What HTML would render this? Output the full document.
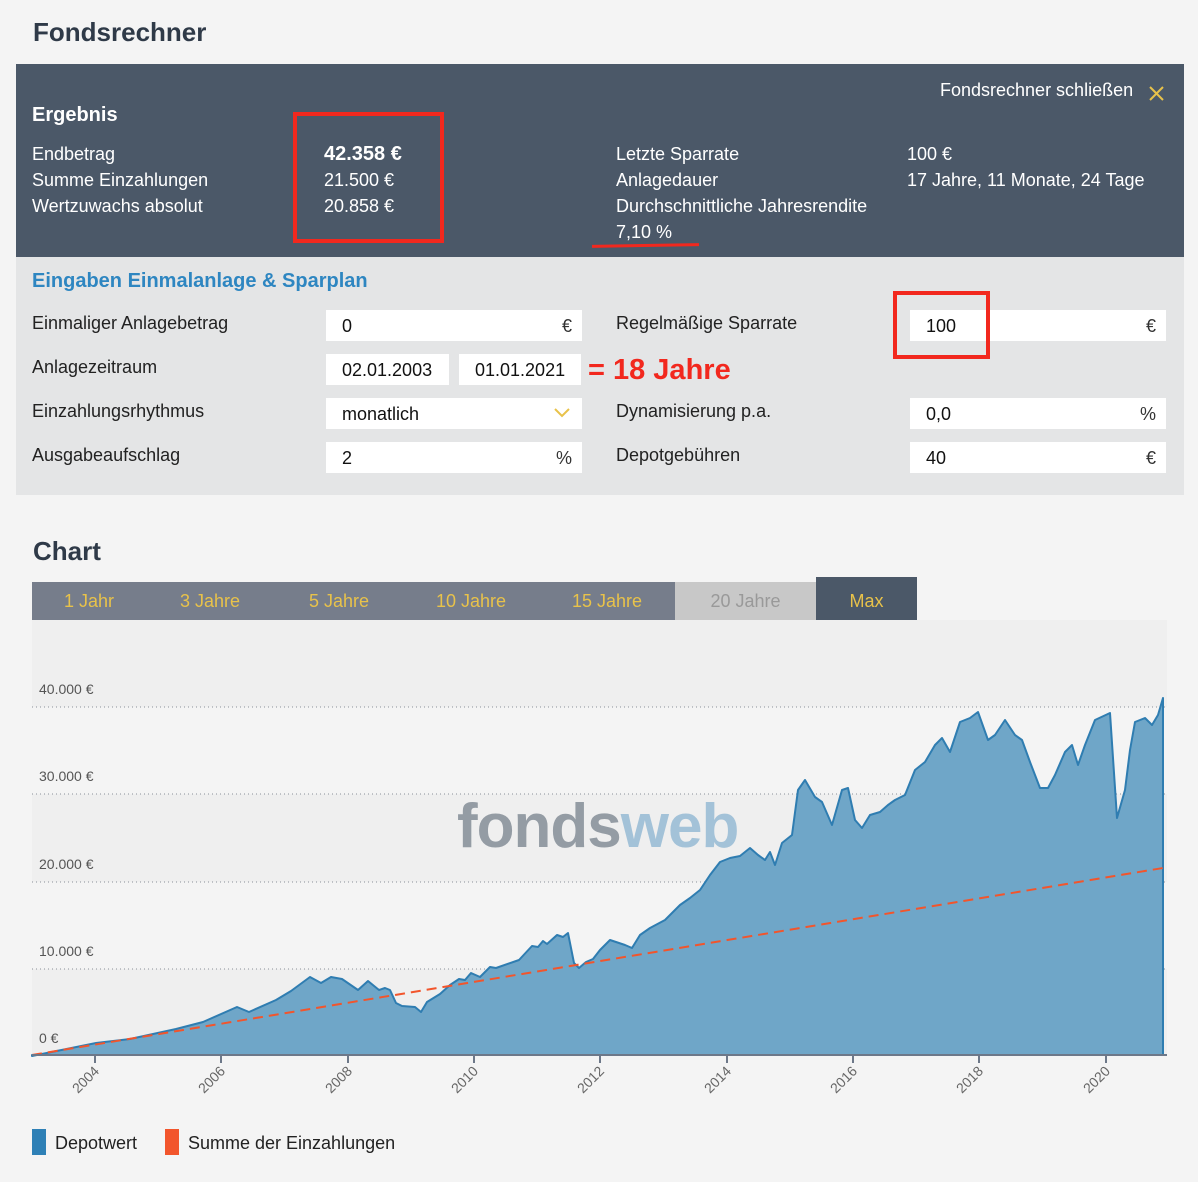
<!DOCTYPE html>
<html><head><meta charset="utf-8"><style>
*{margin:0;padding:0;box-sizing:border-box}
body{width:1198px;height:1182px;background:#f4f4f4;font-family:"Liberation Sans",sans-serif;position:relative;overflow:hidden;color:#222}
.a{position:absolute;white-space:nowrap}
.w{color:#fff;font-size:18px}
.l{font-size:18px;color:#222}
.in{position:absolute;background:#fff;height:31px;font-size:18px;padding:6px 16px;color:#111}
.in span{position:absolute;right:10px;top:6px;color:#333}
.tab{position:absolute;top:582px;height:38px;font-size:18px;color:#e8c24a;text-align:center;line-height:38px}
.red{position:absolute;border:4px solid #f2281e}
</style></head><body>
<div class="a" style="left:33px;top:17px;font-size:26px;font-weight:bold;color:#2f3a48">Fondsrechner</div>

<div class="a" style="left:16px;top:64px;width:1168px;height:193px;background:#4b5868"></div>
<div class="a w" style="left:940px;top:80px;font-size:18px">Fondsrechner schließen</div>
<svg class="a" style="left:1149px;top:86px" width="15" height="15"><path d="M1 1L14 14M14 1L1 14" stroke="#e8c24a" stroke-width="2"/></svg>
<div class="a w" style="left:32px;top:104px;font-size:20px;font-weight:bold">Ergebnis</div>
<div class="a w" style="left:32px;top:141px;line-height:26px">Endbetrag<br>Summe Einzahlungen<br>Wertzuwachs absolut</div>
<div class="a w" style="left:324px;top:141px;line-height:26px"><b style="font-size:20px">42.358 €</b><br>21.500 €<br>20.858 €</div>
<div class="a w" style="left:616px;top:141px;line-height:26px">Letzte Sparrate<br>Anlagedauer<br>Durchschnittliche Jahresrendite<br>7,10 %</div>
<div class="a w" style="left:907px;top:141px;line-height:26px">100 €<br>17 Jahre, 11 Monate, 24 Tage</div>
<div class="red" style="left:293px;top:112px;width:151px;height:131px"></div>
<div class="a" style="left:592px;top:244px;width:107px;height:3px;background:#f2281e;transform:rotate(-1deg)"></div>

<div class="a" style="left:16px;top:257px;width:1168px;height:238px;background:#e4e5e6"></div>
<div class="a" style="left:32px;top:270px;font-size:20px;font-weight:bold;color:#2e86c1">Eingaben Einmalanlage &amp; Sparplan</div>
<div class="a l" style="left:32px;top:313px">Einmaliger Anlagebetrag</div>
<div class="a l" style="left:32px;top:357px">Anlagezeitraum</div>
<div class="a l" style="left:32px;top:401px">Einzahlungsrhythmus</div>
<div class="a l" style="left:32px;top:445px">Ausgabeaufschlag</div>
<div class="a l" style="left:616px;top:313px">Regelmäßige Sparrate</div>
<div class="a l" style="left:616px;top:401px">Dynamisierung p.a.</div>
<div class="a l" style="left:616px;top:445px">Depotgebühren</div>
<div class="in" style="left:326px;top:310px;width:256px">0<span>€</span></div>
<div class="in" style="left:326px;top:354px;width:123px">02.01.2003</div>
<div class="in" style="left:459px;top:354px;width:122px">01.01.2021</div>
<div class="in" style="left:326px;top:398px;width:256px">monatlich<svg style="position:absolute;right:12px;top:10px" width="16" height="10"><path d="M1 1L8 8L15 1" stroke="#e8c24a" stroke-width="2" fill="none"/></svg></div>
<div class="in" style="left:326px;top:442px;width:256px">2<span>%</span></div>
<div class="in" style="left:910px;top:310px;width:256px">100<span>€</span></div>
<div class="in" style="left:910px;top:398px;width:256px">0,0<span>%</span></div>
<div class="in" style="left:910px;top:442px;width:256px">40<span>€</span></div>
<div class="a" style="left:588px;top:354px;font-size:29px;font-weight:bold;color:#f2281e">= 18 Jahre</div>
<div class="red" style="left:893px;top:291px;width:97px;height:68px"></div>

<div class="a" style="left:33px;top:536px;font-size:26px;font-weight:bold;color:#2f3a48">Chart</div>
<div class="a" style="left:32px;top:582px;width:643px;height:38px;background:#767d8b"></div>
<div class="tab" style="left:49px;width:80px">1 Jahr</div>
<div class="tab" style="left:165px;width:90px">3 Jahre</div>
<div class="tab" style="left:294px;width:90px">5 Jahre</div>
<div class="tab" style="left:421px;width:100px">10 Jahre</div>
<div class="tab" style="left:557px;width:100px">15 Jahre</div>
<div class="tab" style="left:675px;width:141px;background:#c8c8c8;color:#999">20 Jahre</div>
<div class="tab" style="left:816px;width:101px;top:577px;height:43px;line-height:48px;background:#4b5868">Max</div>

<svg class="a" style="left:0;top:0" width="1198" height="1182">
<rect x="32" y="620" width="1135" height="87" fill="#efefef"/>
<rect x="32" y="794" width="1135" height="88" fill="#efefef"/>
<rect x="32" y="969" width="1135" height="86" fill="#efefef"/>
<text x="457" y="847" font-family="Liberation Sans" font-weight="bold" font-size="62" fill="#949ca4" letter-spacing="-1">fonds<tspan fill="#a3c2d8">web</tspan></text>
<g stroke="#8a8f99" stroke-dasharray="1,3" stroke-width="1"><line x1="32" y1="707" x2="1167" y2="707"/><line x1="32" y1="794" x2="1167" y2="794"/><line x1="32" y1="882" x2="1167" y2="882"/><line x1="32" y1="969" x2="1167" y2="969"/></g>
<path fill="#6fa6c8" stroke="#2f7db1" stroke-width="2" stroke-linejoin="round" d="M32 1056L96 1043L130 1039L176 1029L203 1022L237 1007L249 1012L276 1000L291 991L310 977L321 983L331 977L342 979L358 990L368 981L379 990L385 988L390 990L396 1003L402 1006L415 1007L421 1012L427 1002L440 994L450 985L459 979L465 980L471 973L480 977L490 967L496 968L519 960L532 946L538 947L543 941L547 944L557 935L563 937L568 933L574 963L579 968L586 962L593 959L600 950L610 940L625 945L632 948L640 935L650 928L665 920L680 905L690 898L700 890L710 875L720 862L730 858L740 856L750 848L758 855L765 860L770 852L775 865L782 843L792 835L798 790L805 780L815 797L822 802L832 825L842 790L848 788L855 820L862 828L870 815L880 812L888 805L895 800L905 795L915 770L925 762L935 745L942 738L950 752L960 722L970 718L978 712L988 740L995 735L1005 720L1015 735L1022 740L1030 762L1040 788L1048 788L1055 775L1065 752L1072 745L1078 765L1085 745L1095 720L1110 713L1117 818L1125 790L1130 750L1135 722L1145 718L1152 725L1158 715L1163 698L1163 1055L32 1055Z"/>
<line x1="32" y1="1055" x2="1163" y2="868" stroke="#f2552c" stroke-width="2" stroke-dasharray="10,6"/>
<line x1="32" y1="1055" x2="1167" y2="1055" stroke="#6d7889" stroke-width="2"/>
<g stroke="#6d7889" stroke-width="2"><line x1="95" y1="1055" x2="95" y2="1063"/><line x1="221" y1="1055" x2="221" y2="1063"/><line x1="348" y1="1055" x2="348" y2="1063"/><line x1="474" y1="1055" x2="474" y2="1063"/><line x1="600" y1="1055" x2="600" y2="1063"/><line x1="727" y1="1055" x2="727" y2="1063"/><line x1="853" y1="1055" x2="853" y2="1063"/><line x1="979" y1="1055" x2="979" y2="1063"/><line x1="1106" y1="1055" x2="1106" y2="1063"/></g>
<g font-family="Liberation Sans" font-size="14" fill="#666" text-anchor="end">
<text transform="translate(100,1072) rotate(-45)">2004</text>
<text transform="translate(226,1072) rotate(-45)">2006</text>
<text transform="translate(353,1072) rotate(-45)">2008</text>
<text transform="translate(479,1072) rotate(-45)">2010</text>
<text transform="translate(605,1072) rotate(-45)">2012</text>
<text transform="translate(732,1072) rotate(-45)">2014</text>
<text transform="translate(858,1072) rotate(-45)">2016</text>
<text transform="translate(984,1072) rotate(-45)">2018</text>
<text transform="translate(1111,1072) rotate(-45)">2020</text>
</g>
<g font-family="Liberation Sans" font-size="14" fill="#555">
<text x="39" y="694">40.000 €</text><text x="39" y="781">30.000 €</text><text x="39" y="869">20.000 €</text><text x="39" y="956">10.000 €</text><text x="39" y="1043">0 €</text>
</g>
<rect x="32" y="1129" width="14" height="26" fill="#2e80b6"/>
<rect x="165" y="1129" width="14" height="26" fill="#f2552c"/>
<text x="55" y="1149" font-family="Liberation Sans" font-size="18" fill="#222">Depotwert</text>
<text x="188" y="1149" font-family="Liberation Sans" font-size="18" fill="#222">Summe der Einzahlungen</text>
</svg>
</body></html>
